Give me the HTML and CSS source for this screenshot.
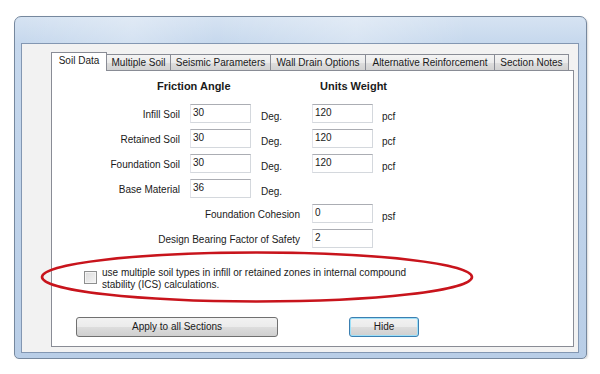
FILE: index.html
```html
<!DOCTYPE html>
<html>
<head>
    <title>Soil Data</title>
    <link rel="stylesheet" href="styles.css">
</head>
<body>

    <div class="window">
        <div class="titlebar"></div>
        <div class="client">
            <div class="tabs">
                <div class="tab active tab-soil">Soil Data</div>
                <div class="tab tab-multi">Multiple Soil</div>
                <div class="tab tab-seismic">Seismic Parameters</div>
                <div class="tab tab-drain">Wall Drain Options</div>
                <div class="tab tab-alt">Alternative Reinforcement</div>
                <div class="tab tab-notes">Section Notes</div>
            </div>
            <div class="panel">
                <div class="heads">
                    <span class="head head-friction">Friction Angle</span>
                    <span class="head head-weight">Units Weight</span>
                </div>

                <div class="row">
                    <span class="label">Infill Soil</span>
                    <div class="field">30</div>
                    <span class="unit">Deg.</span>
                    <div class="field">120</div>
                    <span class="unit unit-right">pcf</span>
                </div>
                <div class="row">
                    <span class="label">Retained Soil</span>
                    <div class="field">30</div>
                    <span class="unit">Deg.</span>
                    <div class="field">120</div>
                    <span class="unit unit-right">pcf</span>
                </div>
                <div class="row">
                    <span class="label">Foundation Soil</span>
                    <div class="field">30</div>
                    <span class="unit">Deg.</span>
                    <div class="field">120</div>
                    <span class="unit unit-right">pcf</span>
                </div>
                <div class="row">
                    <span class="label">Base Material</span>
                    <div class="field">36</div>
                    <span class="unit">Deg.</span>
                </div>
                <div class="row">
                    <span class="label label-wide">Foundation Cohesion</span>
                    <div class="field">0</div>
                    <span class="unit unit-right">psf</span>
                </div>
                <div class="row">
                    <span class="label label-wide">Design Bearing Factor of Safety</span>
                    <div class="field">2</div>
                </div>

                <div class="check">
                    <span class="box"></span>
                    <span class="check-text">use multiple soil types in infill or retained zones in internal compound<br>stability (ICS) calculations.</span>
                </div>

                <div class="buttons">
                    <div class="button button-apply">Apply to all Sections</div>
                    <div class="button button-hide">Hide</div>
                </div>
            </div>
        </div>
    </div>

    <svg class="mark" width="440" height="58" viewBox="0 0 440 58">
        <ellipse cx="217" cy="28" rx="215" ry="24.5" fill="none" stroke="#c8141c" stroke-width="2.6"/>
    </svg>

</body>
</html>
```

FILE: styles.css
```css
body {
    margin: 0;
    background: #ffffff;
    font-family: "Liberation Sans", Arial, sans-serif;
    font-size: 10px;
    color: #1a1a1a;
}
.window {
    box-sizing: border-box;
    margin: 16px 0 0 14px;
    width: 573px;
    height: 343px;
    border: 1px solid #76889e;
    border-radius: 7px 7px 5px 5px;
    padding: 0 7px 5px 6px;
    background: linear-gradient(180deg, #d6e3f2 0px, #c6d8ed 26px, #b9cee7 100%);
    box-shadow: 1px 1px 2px rgba(0, 0, 0, 0.15);
}
.titlebar {
    height: 26px;
    background: linear-gradient(90deg, rgba(255,255,255,0) 0%, rgba(255,255,255,0.25) 20%, rgba(255,255,255,0) 35%, rgba(255,255,255,0.3) 60%, rgba(255,255,255,0) 80%);
}
.client {
    box-sizing: border-box;
    width: 558px;
    height: 310px;
    border: 1px solid #8397b2;
    background: #f2f2f2;
    padding: 8px 4px 0 29px;
}
.tabs {
    display: flex;
    align-items: flex-end;
    height: 18px;
}
.tab {
    box-sizing: border-box;
    height: 16px;
    line-height: 15px;
    text-align: center;
    white-space: nowrap;
    border: 1px solid #898c95;
    border-bottom: none;
    margin-right: -1px;
    background: linear-gradient(180deg, #f4f4f4 0%, #ebebeb 50%, #dedede 51%, #d2d2d2 100%);
}
.tab.active {
    position: relative;
    z-index: 1;
    height: 19px;
    line-height: 16px;
    margin-bottom: -1px;
    background: #ffffff;
}
.tab-soil { width: 56px; }
.tab-multi { width: 65px; }
.tab-seismic { width: 101px; }
.tab-drain { width: 96px; }
.tab-alt { width: 130px; }
.tab-notes { width: 75px; }
.panel {
    box-sizing: border-box;
    width: 523px;
    height: 277px;
    border: 1px solid #898c95;
    background: #ffffff;
    padding-top: 8px;
}
.heads {
    display: flex;
    height: 14px;
    line-height: 14px;
    margin-bottom: 11px;
    font-size: 11px;
    font-weight: bold;
}
.head-friction {
    margin-left: 105px;
    width: 80px;
}
.head-weight {
    margin-left: 83px;
}
.row {
    display: flex;
    align-items: flex-start;
    height: 25px;
}
.label {
    width: 128px;
    margin-right: 10px;
    padding-top: 5px;
    line-height: 12px;
    text-align: right;
    white-space: nowrap;
}
.label-wide {
    width: 248px;
    margin-right: 12px;
}
.field {
    box-sizing: border-box;
    width: 61px;
    height: 19px;
    line-height: 16px;
    padding-left: 2px;
    border: 1px solid #d4d8dd;
    border-top-color: #abadb3;
    border-left-color: #e2e3ea;
    background: #ffffff;
}
.unit {
    width: 51px;
    margin-left: 10px;
    padding-top: 7px;
    line-height: 12px;
}
.unit-right {
    margin-left: 9px;
}
.check {
    display: flex;
    align-items: flex-start;
    margin: 13px 0 0 32px;
    line-height: 12px;
}
.box {
    box-sizing: border-box;
    width: 13px;
    height: 13px;
    margin: 4px 5px 0 0;
    border: 1px solid #8e8f8f;
    background: linear-gradient(135deg, #dcdcdc 0%, #f4f4f4 100%);
    box-shadow: inset 0 0 0 1px #f4f4f4;
}
.buttons {
    display: flex;
    margin: 26px 0 0 24px;
}
.button {
    box-sizing: border-box;
    height: 20px;
    line-height: 18px;
    text-align: center;
    border: 1px solid #707070;
    border-radius: 3px;
    background: linear-gradient(180deg, #f2f2f2 0%, #ebebeb 50%, #dddddd 51%, #cfcfcf 100%);
}
.button-apply {
    width: 202px;
}
.button-hide {
    width: 70px;
    margin-left: 71px;
    border-color: #3c7fb1;
    box-shadow: inset 0 0 0 1px #9ee0f8;
}
.mark {
    position: absolute;
    left: 40px;
    top: 249px;
}
```
